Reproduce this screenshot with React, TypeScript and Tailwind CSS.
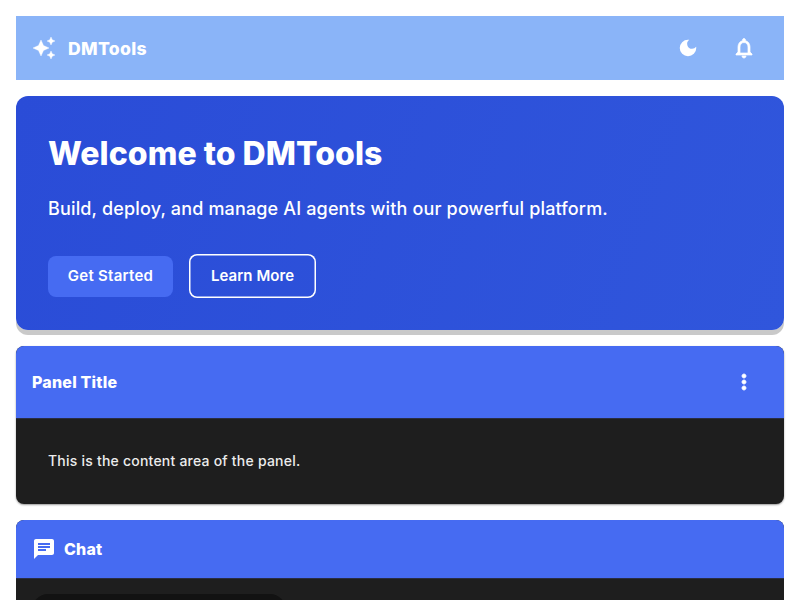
import { MdChat, MdDarkMode } from 'react-icons/md';

function Glyph({ d, weight }: { d: string; weight: number }) {
  return (
    <svg className="size-6" viewBox="0 0 24 24" fill="currentColor" stroke="currentColor" strokeWidth={weight} aria-hidden="true">
      <path d={d} />
    </svg>
  );
}

const SPARKLES =
  'M19 9l1.25-2.75L23 5l-2.75-1.25L19 1l-1.25 2.75L15 5l2.75 1.25L19 9zm-7.5.5L9 4 6.5 9.5 1 12l5.5 2.5L9 20l2.5-5.5L17 12l-5.5-2.5zM19 15l-1.25 2.75L15 19l2.75 1.25L19 23l1.25-2.75L23 19l-2.75-1.25L19 15z';
const BELL =
  'M12 22c1.1 0 2-.9 2-2h-4c0 1.1.9 2 2 2zm6-6v-5c0-3.07-1.63-5.64-4.5-6.32V4c0-.83-.67-1.5-1.5-1.5s-1.5.67-1.5 1.5v.68C7.64 5.36 6 7.92 6 11v5l-2 2v1h16v-1l-2-2zm-2 1H8v-6c0-2.48 1.51-4.5 4-4.5s4 2.02 4 4.5v6z';
const DOTS =
  'M12 8c1.1 0 2-.9 2-2s-.9-2-2-2-2 .9-2 2 .9 2 2 2zm0 2c-1.1 0-2 .9-2 2s.9 2 2 2 2-.9 2-2-.9-2-2-2zm0 6c-1.1 0-2 .9-2 2s.9 2 2 2 2-.9 2-2-.9-2-2-2z';

export default function App() {
  return (
    <main className="h-[600px] w-[800px] overflow-hidden bg-white p-4 font-['Inter',sans-serif] text-white">
      <header className="flex h-16 items-center bg-[#8ab4f8] px-4">
        <Glyph d={SPARKLES} weight={0.4} />
        <span className="ml-3 pt-px text-[17.6px] leading-6 font-extrabold tracking-[0.32px]">DMTools</span>
        <div className="ml-auto flex items-center gap-8 pr-3">
          <div className="flex size-6 items-center justify-center">
            <MdDarkMode className="size-[22px]" />
          </div>
          <Glyph d={BELL} weight={0.7} />
        </div>
      </header>
      <section className="mt-4 h-[234px] rounded-xl bg-[linear-gradient(110deg,#2a4cd7,#3056dc)] px-8 pt-[37px] shadow-[0_5px_0_#c9c9c9]">
        <h1 className="text-[32px] leading-[42px] font-extrabold tracking-[0.05px]">Welcome to DMTools</h1>
        <p className="mt-5 text-lg leading-7 font-[450] tracking-[0.155px]">Build, deploy, and manage AI agents with our powerful platform.</p>
        <div className="mt-[31px] flex items-center gap-4">
          <button className="h-[41px] w-[125px] rounded-lg bg-[#466bf2] text-[15px] font-semibold tracking-[0.27px]">Get Started</button>
          <button className="h-11 w-[127px] rounded-lg text-[15px] font-semibold tracking-[0.06px] shadow-[inset_0_0_0_1.5px_white]">Learn More</button>
        </div>
      </section>
      <section className="mt-4 h-[158px] overflow-hidden rounded-lg bg-[#1e1e1e] shadow-[0_1px_2px_rgba(0,0,0,0.4)]">
        <div className="flex h-[72px] items-center justify-between bg-[#466bf2] pr-7 pl-4">
          <h2 className="text-base font-extrabold tracking-[0.2px]">Panel Title</h2>
          <Glyph d={DOTS} weight={0.8} />
        </div>
        <p className="border-t border-[#292d43] px-8 pt-[31px] text-sm leading-[22px] font-[450] tracking-[0.22px] text-[#ececec]">This is the content area of the panel.</p>
      </section>
      <section className="mt-4 h-[200px] overflow-hidden rounded-lg bg-[#1e1e1e]">
        <div className="flex h-[58px] items-center bg-[#466bf2] px-4">
          <MdChat className="size-6" />
          <h2 className="ml-2 text-base font-extrabold tracking-[0.2px]">Chat</h2>
        </div>
        <div className="border-t border-[#292d43] px-4 pt-[15px]">
          <div className="h-12 w-[254px] rounded-2xl bg-[#121212]" />
        </div>
      </section>
    </main>
  );
}
